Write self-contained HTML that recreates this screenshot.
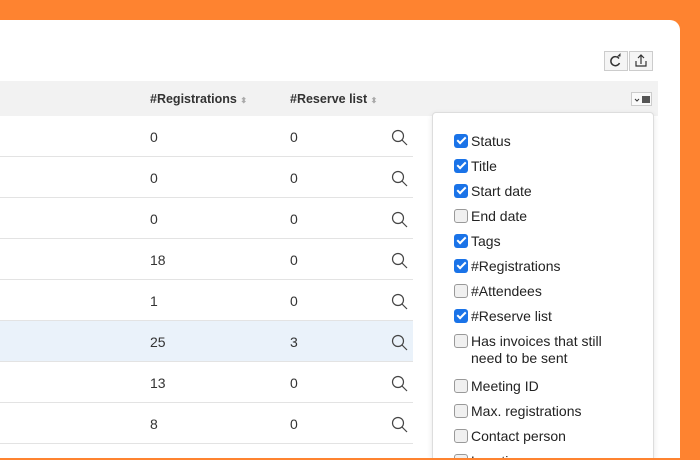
<html style="overflow:hidden;width:700px;height:460px"><head><style>
html,body{overflow:hidden}
body{margin:0;width:700px;height:460px;background:#fe8330;position:relative;overflow:hidden;font-family:"Liberation Sans",Arial,sans-serif;font-size:14px;color:#333}
.card{position:absolute;left:0;top:20px;width:680px;height:438px;background:#fff;border-top-right-radius:10px;overflow:hidden}
.tb{position:absolute;top:31px;height:20px;width:24px;border:1px solid #ccc;background:#f5f5f5;box-sizing:border-box}
.hdr{position:absolute;left:0;top:61px;width:658px;height:35px;background:#f2f2f2;font-weight:bold;font-size:12.5px}
.row{position:absolute;left:0;width:413px;height:41px;border-bottom:1px solid #e3e3e3;box-sizing:border-box}
.row span{position:absolute;top:13px}
.dd{position:absolute;left:432px;width:222px;height:346px;background:#fff;border:1px solid #ddd;border-bottom:none;border-radius:4px 4px 0 0;box-shadow:0 2px 6px rgba(0,0,0,.1);overflow:hidden;box-sizing:border-box}
.it{position:absolute;left:21px;font-size:14px;color:#222}
.cb{position:absolute;left:0;top:1px;width:14px;height:14px;border-radius:3px;box-sizing:border-box}
.on{background:#1a73e8}
.off{border:1px solid #999;background:#f0f0f0}
.it span{position:absolute;left:17px;top:0;white-space:nowrap;line-height:17px}
.cb.on::after{content:"";position:absolute;left:5px;top:1px;width:3px;height:7px;border:solid #fff;border-width:0 2px 2px 0;transform:rotate(45deg)}
</style></head><body>
<div class="card">
<div class="tb" style="left:604px"><svg width="22" height="18" viewBox="0 0 22 18"><path d="M14 6.5A4.5 4.5 0 1 0 14.5 11" fill="none" stroke="#333" stroke-width="1.5"/><path d="M12 4.5h3.5v-3.5z" fill="#333"/></svg></div>
<div class="tb" style="left:629px"><svg width="22" height="18" viewBox="0 0 22 18"><path d="M6 9v5h10V9M11 12V3M8 6l3-3 3 3" fill="none" stroke="#333" stroke-width="1.2"/></svg></div>
<div class="hdr">
<span style="position:absolute;left:150px;top:11px">#Registrations <span style="color:#aaa;font-size:8px">⬍</span></span>
<span style="position:absolute;left:290px;top:11px">#Reserve list <span style="color:#aaa;font-size:8px">⬍</span></span>
<div style="position:absolute;left:631px;top:11px;width:21px;height:14px;border:1px solid #ccc;background:#fafafa;box-sizing:border-box"><svg width="21" height="14"><path d="M3 6l2 2 2-2" fill="none" stroke="#333"/><rect x="10" y="3" width="8" height="7" fill="#555"/></svg></div>
</div>
<div style="position:absolute;left:0;top:96px">
<div class="row" style="top:0"><span style="left:150px">0</span><span style="left:290px">0</span></div>
<div class="row" style="top:41px"><span style="left:150px">0</span><span style="left:290px">0</span></div>
<div class="row" style="top:82px"><span style="left:150px">0</span><span style="left:290px">0</span></div>
<div class="row" style="top:123px"><span style="left:150px">18</span><span style="left:290px">0</span></div>
<div class="row" style="top:164px"><span style="left:150px">1</span><span style="left:290px">0</span></div>
<div class="row" style="top:205px;background:#eaf2fa"><span style="left:150px">25</span><span style="left:290px">3</span></div>
<div class="row" style="top:246px"><span style="left:150px">13</span><span style="left:290px">0</span></div>
<div class="row" style="top:287px"><span style="left:150px">8</span><span style="left:290px">0</span></div>
<div class="row" style="top:328px;height:14px;border:none"></div>
</div>
<svg style="position:absolute;left:390px;top:0" width="22" height="438">
<g fill="none" stroke="#444" stroke-width="1.2">
<g transform="translate(0,109)"><circle cx="8" cy="7" r="5.5"/><path d="M12 11l5 5"/></g>
<g transform="translate(0,150)"><circle cx="8" cy="7" r="5.5"/><path d="M12 11l5 5"/></g>
<g transform="translate(0,191)"><circle cx="8" cy="7" r="5.5"/><path d="M12 11l5 5"/></g>
<g transform="translate(0,232)"><circle cx="8" cy="7" r="5.5"/><path d="M12 11l5 5"/></g>
<g transform="translate(0,273)"><circle cx="8" cy="7" r="5.5"/><path d="M12 11l5 5"/></g>
<g transform="translate(0,314)"><circle cx="8" cy="7" r="5.5"/><path d="M12 11l5 5"/></g>
<g transform="translate(0,355)"><circle cx="8" cy="7" r="5.5"/><path d="M12 11l5 5"/></g>
<g transform="translate(0,396)"><circle cx="8" cy="7" r="5.5"/><path d="M12 11l5 5"/></g>
</g></svg>
<div class="dd" style="top:92px">
<div class="it" style="top:20px"><i class="cb on"></i><span>Status</span></div>
<div class="it" style="top:45px"><i class="cb on"></i><span>Title</span></div>
<div class="it" style="top:70px"><i class="cb on"></i><span>Start date</span></div>
<div class="it" style="top:95px"><i class="cb off"></i><span>End date</span></div>
<div class="it" style="top:120px"><i class="cb on"></i><span>Tags</span></div>
<div class="it" style="top:145px"><i class="cb on"></i><span>#Registrations</span></div>
<div class="it" style="top:170px"><i class="cb off"></i><span>#Attendees</span></div>
<div class="it" style="top:195px"><i class="cb on"></i><span>#Reserve list</span></div>
<div class="it" style="top:220px"><i class="cb off"></i><span>Has invoices that still<br>need to be sent</span></div>
<div class="it" style="top:265px"><i class="cb off"></i><span>Meeting ID</span></div>
<div class="it" style="top:290px"><i class="cb off"></i><span>Max. registrations</span></div>
<div class="it" style="top:315px"><i class="cb off"></i><span>Contact person</span></div>
<div class="it" style="top:340px"><i class="cb off"></i><span>Location</span></div>
</div>
</div>
</body></html>
